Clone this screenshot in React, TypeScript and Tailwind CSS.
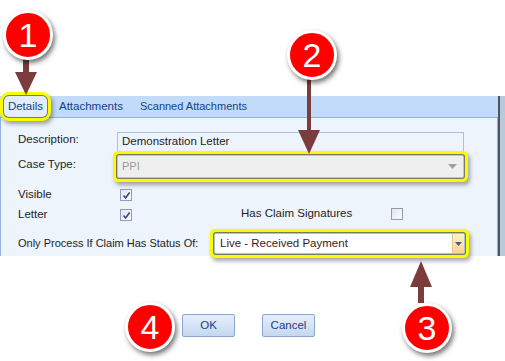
const font = { fontFamily: '"Liberation Sans", Arial, sans-serif' }

function Check({ checked }: { checked: boolean }) {
  return (
    <div className="w-[12px] h-[12px] border border-[#8e9cb5] bg-gradient-to-br from-[#dfe6ef] to-[#fdfdfe] flex items-center justify-center">
      {checked && (
        <svg width="9" height="9" viewBox="0 0 9 9">
          <path d="M1.5 4.5 L3.6 7 L7.6 1.5" fill="none" stroke="#2b4a86" strokeWidth="1.6" />
        </svg>
      )}
    </div>
  )
}

function Callout({ n, className }: { n: string; className: string }) {
  return (
    <div
      className={`absolute w-[50px] h-[50px] rounded-full bg-[#ff0000] border-[3px] border-white shadow-[2px_3px_5px_rgba(0,0,0,0.55)] flex items-center justify-center text-white text-[34px] leading-none ${className}`}
      style={{ fontFamily: '"Liberation Sans", Arial, sans-serif' }}
    >
      {n}
    </div>
  )
}

const highlight =
  'shadow-[0_0_0_1px_#7a7a62,0_0_0_4px_#fafa00,2px_3px_4px_4px_rgba(0,0,0,0.35)]'

export default function App() {
  return (
    <div className="relative w-[505px] h-[361px] bg-white overflow-hidden text-[11px] text-[#1e1e1e] whitespace-nowrap" style={font}>
      <div className="h-[96px]" />

      {/* Dialog panel */}
      <div className="flex">
        <div className="w-[498px]">
          {/* Tabs */}
          <div className="h-[22px] bg-[#c1dbf9] border-b border-[#8db3e2] flex items-end pl-[4px] text-[#15428b] text-[11.5px]">
            <div
              className={`h-[21px] w-[43px] justify-center flex items-center bg-[#e4eefa] rounded-[5px] ${highlight}`}
            >
              Details
            </div>
            <div className="h-[21px] flex items-center ml-[12px]">Attachments</div>
            <div className="h-[21px] flex items-center ml-[17px] text-[11px]">Scanned Attachments</div>
          </div>

          {/* Content */}
          <div className="h-[138px] bg-[#edf4fc] border-l border-r border-[#8db3e2] pl-[17px] flex flex-col">
            <div className="mt-[14px] h-[20px] flex items-center">
              <div className="w-[99px] -mt-[4px] text-[11.5px]">Description:</div>
              <div className="w-[347px] h-[20px] border border-[#a9c1de] bg-[#eef4fc] flex items-center pl-[4px] text-[11.5px]">
                Demonstration Letter
              </div>
            </div>

            <div className="mt-[3px] h-[23px] flex items-center">
              <div className="w-[99px] -mt-[3px] text-[11.5px]">Case Type:</div>
              <div
                className={`w-[347px] h-[23px] border border-[#b8c5d6] bg-[#efefef] rounded-[2px] flex items-center pl-[4px] text-[#9a9a9a] ${highlight}`}
              >
                <span className="flex-1">PPI</span>
                <svg width="9" height="5" viewBox="0 0 9 5" className="mr-[6px]">
                  <path d="M0 0 H9 L4.5 5 Z" fill="#9aa0a8" />
                </svg>
              </div>
            </div>

            <div className="mt-[7px] h-[20px] flex items-center text-[11.5px]">
              <div className="w-[102px]">Visible</div>
              <Check checked />
            </div>

            <div className="h-[20px] flex items-center text-[11.5px]">
              <div className="w-[102px]">Letter</div>
              <Check checked />
              <div className="ml-[109px] w-[150px] -mt-[3px]">Has Claim Signatures</div>
              <div className="-mt-[3px]">
                <Check checked={false} />
              </div>
            </div>

            <div className="mt-[8px] h-[21px] flex items-center">
              <div className="w-[196px]">Only Process If Claim Has Status Of:</div>
              <div
                className={`w-[251px] h-[21px] border border-[#a9c1de] bg-white rounded-[2px] flex items-center ${highlight}`}
              >
                <span className="flex-1 pl-[5px] text-[#3b1a1a] text-[11.5px]">Live - Received Payment</span>
                <div className="w-[12px] h-full border-l border-[#e6c68a] bg-gradient-to-b from-[#fff3cf] to-[#fbd48a] flex items-center justify-center">
                  <svg width="7" height="4" viewBox="0 0 7 4">
                    <path d="M0 0 H7 L3.5 4 Z" fill="#3b5f9a" />
                  </svg>
                </div>
              </div>
            </div>
          </div>
        </div>

        {/* Right window edge */}
        <div className="w-[7px] h-[160px] border-l-2 border-[#4a5666] bg-[#b9c9da]" />
      </div>

      {/* Buttons */}
      <div className="mt-[58px] pl-[182px] flex gap-[27px] text-[#15428b] text-[11.5px]">
        <button className="w-[53px] h-[23px] border border-[#8aa6cd] rounded-[2px] bg-gradient-to-b from-[#e6effa] to-[#c4d8f0]">
          OK
        </button>
        <button className="w-[53px] h-[23px] border border-[#8aa6cd] rounded-[2px] bg-gradient-to-b from-[#e6effa] to-[#c4d8f0]">
          Cancel
        </button>
      </div>

      {/* Callout arrows */}
      <svg className="absolute left-0 top-0" width="505" height="361" viewBox="0 0 505 361">
        <g fill="#7d3c3c">
          <rect x="23" y="56" width="6" height="18" />
          <path d="M15 72 H37 L26 95 Z" />
          <rect x="307" y="78" width="4" height="54" />
          <path d="M298 130 H320 L309 154 Z" />
          <rect x="418" y="285" width="6" height="18" />
          <path d="M410 287 H432 L421 261 Z" />
        </g>
      </svg>

      <Callout n="1" className="left-[3px] top-[10px]" />
      <Callout n="2" className="left-[287px] top-[30px]" />
      <Callout n="3" className="left-[402px] top-[303px]" />
      <Callout n="4" className="left-[125px] top-[302px]" />
    </div>
  )
}
